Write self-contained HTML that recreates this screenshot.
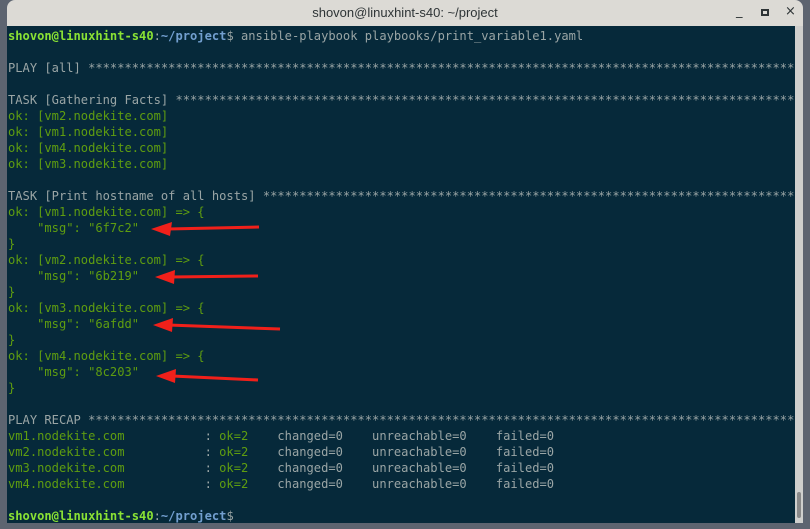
<html><head><style>
body{margin:0;width:810px;height:529px;background:#5d6470;position:relative;overflow:hidden}
.win{position:absolute;left:7px;top:0;width:796px;height:523px;background:#dcdad5;border-radius:8px 8px 0 0;overflow:hidden}
.title{height:26px;text-align:center;font:13px "Liberation Sans",sans-serif;line-height:25px;color:#2e3436}
.term{position:absolute;left:0;top:26px;width:788px;height:497px;background:#06293a}
.sb{position:absolute;left:788px;top:26px;width:8px;height:497px;background:#cfcfcd}
.th{position:absolute;left:790px;top:492px;width:4px;height:26px;background:#888;border-radius:2px}
.clip{position:absolute;left:7px;top:26px;width:788px;height:497px;overflow:hidden}
pre{margin:0;position:absolute;left:1px;top:2px;font:12.1px "DejaVu Sans Mono",monospace;line-height:16px;color:#9aa5a5;white-space:pre}
.g{color:#5f9d10}.p{color:#8ae234;font-weight:bold}.b{color:#729fcf;font-weight:bold}
.ic{position:absolute;top:6px;font:13px "DejaVu Sans",sans-serif;color:#2e3436}
</style></head><body>
<div class="win"><div class="title">shovon@linuxhint-s40: ~/project</div>
<span class="ic" style="left:729px;top:4px">_</span><span class="ic" style="left:754px;top:9px;width:8px;height:7px;border:2px solid #2e3436;box-sizing:border-box;display:block"></span><span class="ic" style="left:778px;top:4px">×</span>
<div class="term"></div><div class="sb"></div><div class="th"></div></div>
<div class="clip"><pre><span class="p">shovon@linuxhint-s40</span>:<span class="b">~/project</span>$ ansible-playbook playbooks/print_variable1.yaml

PLAY [all] ****************************************************************************************************

TASK [Gathering Facts] ****************************************************************************************
<span class="g">ok: [vm2.nodekite.com]
ok: [vm1.nodekite.com]
ok: [vm4.nodekite.com]
ok: [vm3.nodekite.com]</span>

TASK [Print hostname of all hosts] ****************************************************************************
<span class="g">ok: [vm1.nodekite.com] => {
    "msg": "6f7c2"
}
ok: [vm2.nodekite.com] => {
    "msg": "6b219"
}
ok: [vm3.nodekite.com] => {
    "msg": "6afdd"
}
ok: [vm4.nodekite.com] => {
    "msg": "8c203"
}</span>

PLAY RECAP ****************************************************************************************************
<span class="g">vm1.nodekite.com</span>           : <span class="g">ok=2</span>    changed=0    unreachable=0    failed=0
<span class="g">vm2.nodekite.com</span>           : <span class="g">ok=2</span>    changed=0    unreachable=0    failed=0
<span class="g">vm3.nodekite.com</span>           : <span class="g">ok=2</span>    changed=0    unreachable=0    failed=0
<span class="g">vm4.nodekite.com</span>           : <span class="g">ok=2</span>    changed=0    unreachable=0    failed=0

<span class="p">shovon@linuxhint-s40</span>:<span class="b">~/project</span>$</pre></div>
<svg width="810" height="529" style="position:absolute;left:0;top:0">
<g stroke="#f0201a" stroke-width="3" fill="#f0201a">
<line x1="168" y1="229" x2="259" y2="227"/><polygon points="151,229 172,222 170,236" stroke="none"/>
<line x1="170" y1="277" x2="258" y2="276"/><polygon points="155,277 175,270 174,284" stroke="none"/>
<line x1="168" y1="325" x2="280" y2="329"/><polygon points="153,325 173,318 172,332" stroke="none"/>
<line x1="172" y1="376" x2="258" y2="380"/><polygon points="156,376 176,369 175,383" stroke="none"/>
</g></svg>
</body></html>
